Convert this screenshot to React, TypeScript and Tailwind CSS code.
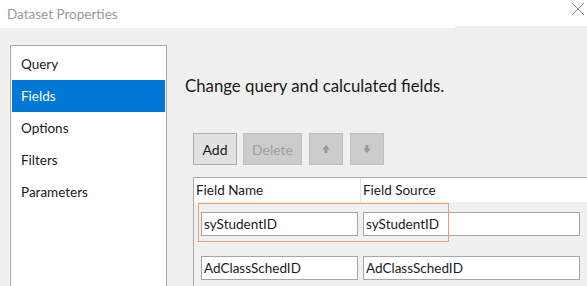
const font = { fontFamily: 'Lato, "Noto Sans", sans-serif' };

const navItems = ["Query", "Fields", "Options", "Filters", "Parameters"];

const ArrowIcon = ({ down }: { down?: boolean }) => (
  <svg width="10" height="10" viewBox="0 0 10 10" className={down ? "rotate-180" : ""}>
    <path d="M5 1 L9 5.5 L6.5 5.5 L6.5 9 L3.5 9 L3.5 5.5 L1 5.5 Z" fill="#9a9a9a" />
  </svg>
);

const FieldRow = ({ name, source }: { name: string; source: string }) => (
  <div className="flex items-center h-[44px] pl-[7px]">
    <div className="w-[157px] h-[24px] border border-[#a6a6a6] bg-white px-[2px] flex items-center text-[13.5px] text-[#1a1a1a]">
      {name}
    </div>
    <div className="w-[217px] h-[24px] ml-[5px] border border-[#a6a6a6] bg-white px-[2px] flex items-center text-[13.5px] text-[#1a1a1a]">
      {source}
    </div>
  </div>
);

export default function App() {
  return (
    <div className="w-[587px] h-[286px] overflow-hidden bg-[#f0f0f0] flex flex-col" style={font}>
      <div className="flex items-start">
        <div className="w-[455px] h-[28px] bg-white pl-[7px] flex items-center text-[13.5px] text-[#9a9a9a]">
          Dataset Properties
        </div>
        <div className="flex-1 h-[26px] bg-white flex justify-end pr-[2px] pt-[2px]">
          <svg width="14" height="14" viewBox="0 0 14 14">
            <path d="M1 1 L13 13 M13 1 L1 13" stroke="#8a8a8a" strokeWidth="1" />
          </svg>
        </div>
      </div>

      <div className="flex flex-1 min-h-0">
        <div className="ml-[10px] mt-[17px] w-[157px] bg-white border border-[#a8a8a8] border-b-0 pt-[2px] px-px">
          {navItems.map((item) => (
            <div
              key={item}
              className={
                "h-[32px] pl-[9px] flex items-center text-[13.5px] " +
                (item === "Fields" ? "bg-[#0078d7] text-white" : "text-[#1a1a1a]")
              }
            >
              {item}
            </div>
          ))}
        </div>

        <div className="flex-1 flex flex-col">
          <div className="pl-[18px] mt-[47px] h-[22px] flex items-center text-[16.8px] text-[#1a1a1a]">
            Change query and calculated fields.
          </div>

          <div className="pl-[26px] mt-[36px] flex gap-[6px]">
            <div className="w-[44px] h-[32px] bg-[#e1e1e1] border border-[#adadad] flex items-center justify-center text-[14px] text-[#1a1a1a]">
              Add
            </div>
            <div className="w-[59px] h-[32px] bg-[#cccccc] border border-[#bfbfbf] flex items-center justify-center text-[14px] text-[#a0a0a0]">
              Delete
            </div>
            <div className="w-[34px] h-[32px] ml-px bg-[#cccccc] border border-[#bfbfbf] flex items-center justify-center">
              <ArrowIcon />
            </div>
            <div className="w-[34px] h-[32px] ml-px bg-[#cccccc] border border-[#bfbfbf] flex items-center justify-center">
              <ArrowIcon down />
            </div>
          </div>

          <div className="ml-[26px] mt-[12px] w-[394px] flex-1 border-t border-l border-[#a8a8a8] relative">
            <div className="flex h-[24px] bg-white text-[13.5px] text-[#1a1a1a]">
              <div className="w-[167px] pl-[2px] flex items-center border-r border-[#e0e0e0]">Field Name</div>
              <div className="flex-1 pl-[2px] flex items-center">Field Source</div>
            </div>
            <FieldRow name="syStudentID" source="syStudentID" />
            <FieldRow name="AdClassSchedID" source="AdClassSchedID" />
            <div className="absolute left-[4px] top-[25px] w-[251px] h-[39px] border-[1.5px] border-[#e8a272]" />
          </div>
        </div>
      </div>
    </div>
  );
}
